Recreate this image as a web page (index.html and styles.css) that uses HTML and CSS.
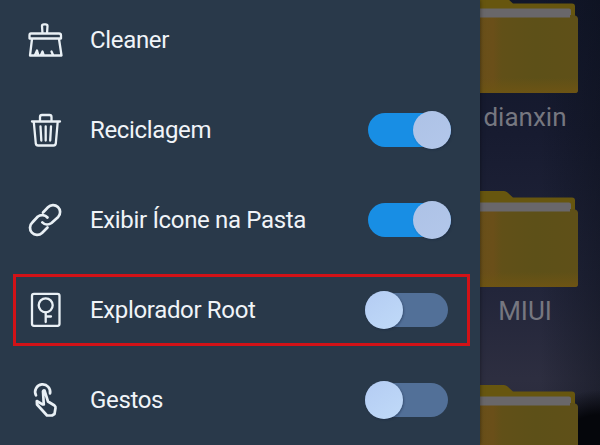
FILE: index.html
```
<!DOCTYPE html>
<html lang="pt">
<head>
<meta charset="utf-8">
<title>Menu</title>
<link rel="stylesheet" href="styles.css">
</head>
<body>
<svg width="0" height="0" class="defs">
  <defs>
    <linearGradient id="front" x1="0" x2="1" y1="0" y2="0">
      <stop offset="0" stop-color="#69501a"/>
      <stop offset=".2" stop-color="#6a4f19"/>
      <stop offset=".28" stop-color="#615018"/>
      <stop offset=".6" stop-color="#5d5018"/>
      <stop offset="1" stop-color="#5f5018"/>
    </linearGradient>
    <linearGradient id="edge" x1="0" x2="0" y1="0" y2="1">
      <stop offset="0" stop-color="#6d5414" stop-opacity="0"/>
      <stop offset=".8" stop-color="#6d5414" stop-opacity="0"/>
      <stop offset="1" stop-color="#6d5414"/>
    </linearGradient>
    <symbol id="folder" viewBox="0 0 106 97">
      <path d="M0 3a3 3 0 0 1 3-3h31q2 0 3.500 1.500L43 6.500h59q3 0 3 3V24H0z" transform="translate(-2 0)" fill="#67560f"/>
      <path d="M4 11.500h93q2 0 2 2V24H4z" fill="#69676a"/>
      <path d="M0 20.500h98V18l4 0q4 1 4 4v71q0 3-3 3H0z" fill="url(#front)"/>
      <path d="M0 20.500h106v72q0 3.500-3 3.500H0z" fill="url(#edge)"/>
    </symbol>
  </defs>
</svg>
<div class="screen">
  <nav class="drawer">
    <div class="row">
      <svg class="icon" viewBox="0 0 40 40"><path d="M17.500 13.500 17 6q0-1.700 2-1.700h1.500q2 0 2 1.700L22 13.500M6 13.500h28q2 0 2 2V18.500H4.500V15.500q0-2 1.500-2zM7 19 5 35.500H36.500L34 19M10 35l2-4.500 1 3.500M16 35l1.500-3.500 1 3M28 35l-1.500-3.500"/></svg>
      <span class="label">Cleaner</span>
    </div>
    <div class="row">
      <svg class="icon" viewBox="0 0 40 40"><path d="M7 11.500H35M15 11V7q0-2 2-2h7.500q2 0 2 2v4M8.800 12l2 21.500q.3 2 2.300 2H28.500q2 0 2.300-2L32.700 12M15.500 16.500l.8 14M20.700 16.500v14M26 16.500l-.8 14"/></svg>
      <span class="label">Reciclagem</span>
      <span class="switch on"></span>
    </div>
    <div class="row">
      <svg class="icon thick" viewBox="0 0 40 40"><path d="M18 12.500l5-5.200a7 7 0 0 1 10.200 9.600L26.500 23a7 7 0 0 1-9.200-.6M22.500 17.500a7 7 0 0 0-9.600-1l-5.600 6A7 7 0 0 0 17 33l5.500-5.500"/></svg>
      <span class="label">Exibir Ícone na Pasta</span>
      <span class="switch on"></span>
    </div>
    <div class="row">
      <svg class="icon" viewBox="0 0 40 40"><rect x="7" y="3.800" width="27.500" height="32" rx="2"/><circle cx="20.700" cy="15.300" r="7"/><path d="M20.700 22.500V32M20.700 26.500H26"/></svg>
      <span class="label">Explorador Root</span>
      <span class="switch"></span>
      <span class="highlight"></span>
    </div>
    <div class="row">
      <svg class="icon thick" viewBox="0 0 40 40"><path d="M11 15.300A7.500 7.500 0 1 1 25 13.500M18.800 24.500 18 11.500q.2-1.500 1.500-1L23 21.500l6.500 4q1.300 1 1 2.500L29.500 34l-2.500 1.500h-5L17.500 30.500 12 24.500 11.800 21l5.700 3.300"/></svg>
      <span class="label">Gestos</span>
      <span class="switch"></span>
    </div>
  </nav>
  <main class="files">
    <div class="file"><svg class="folder"><use href="#folder"/></svg><span class="name">dianxin</span></div>
    <div class="file"><svg class="folder"><use href="#folder"/></svg><span class="name">MIUI</span></div>
    <div class="file"><svg class="folder"><use href="#folder"/></svg></div>
  </main>
</div>
</body>
</html>
```
FILE: styles.css
```
body {
  margin: 0;
  font-family: Roboto, "Liberation Sans", sans-serif;
}

.defs {
  display: block;
}

.screen {
  display: flex;
  width: 600px;
  height: 445px;
  overflow: hidden;
}

.drawer {
  z-index: 1;
  flex: none;
  width: 480px;
  height: 445px;
  background: #29394a;
  box-shadow: 0 0 4px rgba(0, 0, 0, .5);
}

.row {
  position: relative;
  box-sizing: border-box;
  display: flex;
  align-items: center;
  height: 90px;
  padding: 0 29px 0 25px;
}

.row:first-child {
  height: 85px;
  padding-bottom: 5px;
}

.icon {
  flex: none;
  width: 40px;
  height: 40px;
  margin-right: 25px;
  fill: none;
  stroke: #e9f0f5;
  stroke-width: 2.3;
  stroke-linecap: round;
  stroke-linejoin: round;
}

.thick {
  stroke-width: 2.7;
}

.label {
  flex: 1;
  color: #f0f4f8;
  font-size: 24px;
  line-height: 30px;
  letter-spacing: -.34px;
  white-space: nowrap;
}

.switch {
  display: flex;
  align-items: center;
  width: 83px;
  height: 34px;
  margin-right: 3px;
  margin-top: -1px;
  border-radius: 17px;
  background: #527098;
}

.switch::before {
  content: "";
  flex: none;
  width: 38px;
  height: 38px;
  border-radius: 50%;
  background: linear-gradient(145deg, #b4ccf3, #c0daf8);
  box-shadow: 1px 1px 2px rgba(20, 35, 65, .4);
}

.switch.on {
  justify-content: flex-end;
  margin-right: 0;
  background: #188ee4;
}

.switch.on::before {
  background: linear-gradient(145deg, #adc2e6, #b3c7ea);
}

.highlight {
  position: absolute;
  box-sizing: border-box;
  left: 13px;
  top: 9px;
  width: 457px;
  height: 72px;
  border: 3px solid #d21217;
}

.files {
  flex: none;
  width: 150px;
  height: 445px;
  margin-left: -30px;
  background:
    radial-gradient(ellipse 70px 55px at 100% 100%, #05060b 55%, transparent),
    linear-gradient(90deg, transparent 60%, rgba(10, 14, 24, .4)),
    linear-gradient(#12172a, #171b30 30%, #22253a 65%, #2d2e40 85%, #292a39);
}

.file {
  display: flex;
  flex-direction: column;
  align-items: center;
  height: 194px;
}

.file:first-child {
  margin-top: -3px;
}

.folder {
  flex: none;
  display: block;
  width: 106px;
  height: 97px;
}

.name {
  margin-top: 7px;
  color: #767780;
  font-size: 26px;
  line-height: 32px;
}
```
